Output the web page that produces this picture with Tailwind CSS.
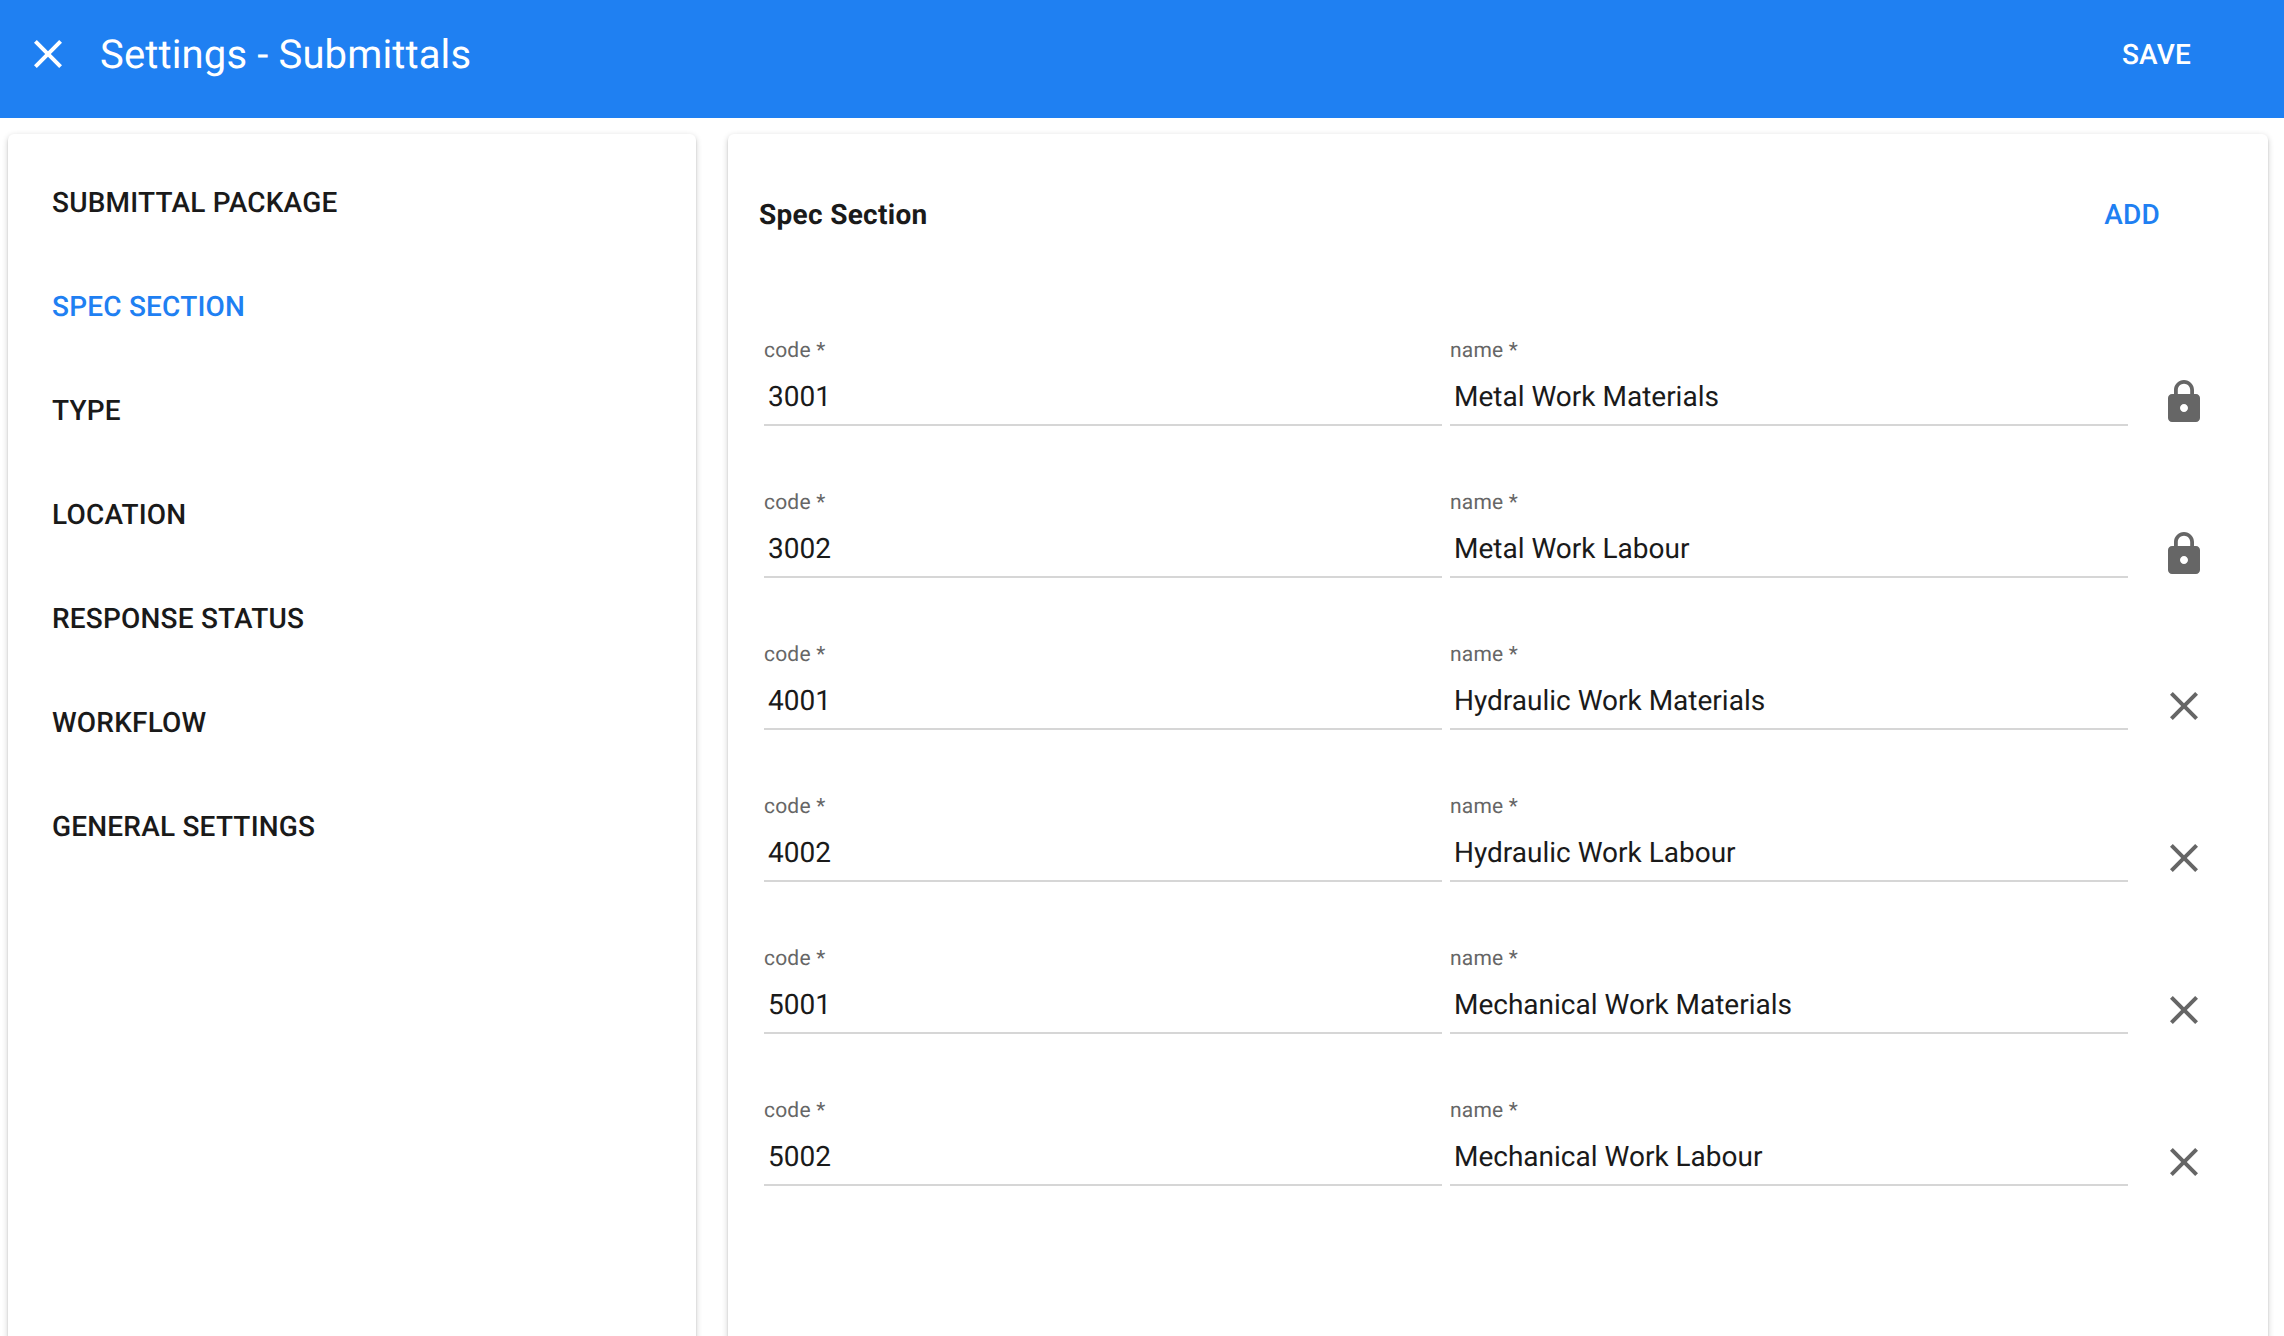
<!DOCTYPE html>
<html lang="en">
<head>
<meta charset="utf-8">
<title>Settings - Submittals</title>
<script src="https://cdn.jsdelivr.net/npm/@tailwindcss/browser@4"></script>
</head>
<body class="m-0 bg-white font-['Roboto',sans-serif] h-[1336px] overflow-hidden [text-rendering:geometricPrecision]">
<header class="h-[118px] bg-[#1f80f2] text-white flex items-center pl-[24px] pr-[93px] pb-[10px]">
  <svg class="w-[48px] h-[48px] fill-white" viewBox="0 0 24 24"><path d="M19 6.41L17.59 5 12 10.59 6.41 5 5 6.41 10.59 12 5 17.59 6.41 19 12 13.41 17.59 19 19 17.59 13.41 12z"/></svg>
  <h1 class="ml-[28px] mt-[2px] text-[40px] leading-[48px] font-normal tracking-[0.14px] grow">Settings - Submittals</h1>
  <span class="mt-[1px] text-[28px] leading-[40px] font-medium tracking-[0.2px]">SAVE</span>
</header>
<main class="flex gap-[32px] pt-[16px] pl-[8px] h-[1218px] overflow-hidden">
  <nav class="w-[688px] h-[1240px] shrink-0 rounded-[6px] bg-white pt-[17px] pl-[44px] shadow-[0_2px_6px_rgba(0,0,0,0.2),0_2px_2px_rgba(0,0,0,0.14),0_4px_2px_-2px_rgba(0,0,0,0.12)] text-[28px] font-medium tracking-[0.2px] text-[#1a1a1a]">
    <div class="h-[104px] flex items-center">SUBMITTAL PACKAGE</div>
    <div class="h-[104px] flex items-center text-[#1f80f2]">SPEC SECTION</div>
    <div class="h-[104px] flex items-center">TYPE</div>
    <div class="h-[104px] flex items-center">LOCATION</div>
    <div class="h-[104px] flex items-center">RESPONSE STATUS</div>
    <div class="h-[104px] flex items-center">WORKFLOW</div>
    <div class="h-[104px] flex items-center">GENERAL SETTINGS</div>
  </nav>
  <section class="w-[1540px] h-[1240px] shrink-0 rounded-[6px] bg-white shadow-[0_2px_6px_rgba(0,0,0,0.2),0_2px_2px_rgba(0,0,0,0.14),0_4px_2px_-2px_rgba(0,0,0,0.12)]">
    <div class="flex items-center justify-between h-[40px] mt-[61px] pl-[31px] pr-[108px]">
      <h2 class="text-[28px] font-bold tracking-[0.3px] text-[#1a1a1a]">Spec Section</h2>
      <span class="text-[28px] font-medium tracking-[0.2px] text-[#1f80f2]">ADD</span>
    </div>
    <div class="mt-[103px] pl-[36px] flex flex-col gap-[64px]">
      <div class="flex items-end">
        <div class="w-[678px] border-b-2 border-[#d6d6d6] h-[88px]"><div class="text-[21px] leading-[24px] pt-[1px] tracking-[0.2px] text-[#666]">code *</div><div class="text-[28px] leading-[44px] pl-[4px] mt-[12px] text-[#1a1a1a]">3001</div></div>
        <div class="w-[678px] ml-[8px] border-b-2 border-[#d6d6d6] h-[88px]"><div class="text-[21px] leading-[24px] pt-[1px] tracking-[0.2px] text-[#666]">name *</div><div class="text-[28px] leading-[44px] pl-[4px] mt-[12px] text-[#1a1a1a]">Metal Work Materials</div></div>
        <svg class="w-[48px] h-[48px] ml-[32px] fill-[#666]" viewBox="0 0 24 24"><path d="M18 8h-1V6c0-2.76-2.24-5-5-5S7 3.24 7 6v2H6c-1.1 0-2 .9-2 2v10c0 1.1.9 2 2 2h12c1.1 0 2-.9 2-2V10c0-1.1-.9-2-2-2zm-6 9c-1.1 0-2-.9-2-2s.9-2 2-2 2 .9 2 2-.9 2-2 2zm3.1-9H8.9V6c0-1.71 1.39-3.1 3.1-3.1 1.71 0 3.1 1.39 3.1 3.1v2z"/></svg>
      </div>
      <div class="flex items-end">
        <div class="w-[678px] border-b-2 border-[#d6d6d6] h-[88px]"><div class="text-[21px] leading-[24px] pt-[1px] tracking-[0.2px] text-[#666]">code *</div><div class="text-[28px] leading-[44px] pl-[4px] mt-[12px] text-[#1a1a1a]">3002</div></div>
        <div class="w-[678px] ml-[8px] border-b-2 border-[#d6d6d6] h-[88px]"><div class="text-[21px] leading-[24px] pt-[1px] tracking-[0.2px] text-[#666]">name *</div><div class="text-[28px] leading-[44px] pl-[4px] mt-[12px] text-[#1a1a1a]">Metal Work Labour</div></div>
        <svg class="w-[48px] h-[48px] ml-[32px] fill-[#666]" viewBox="0 0 24 24"><path d="M18 8h-1V6c0-2.76-2.24-5-5-5S7 3.24 7 6v2H6c-1.1 0-2 .9-2 2v10c0 1.1.9 2 2 2h12c1.1 0 2-.9 2-2V10c0-1.1-.9-2-2-2zm-6 9c-1.1 0-2-.9-2-2s.9-2 2-2 2 .9 2 2-.9 2-2 2zm3.1-9H8.9V6c0-1.71 1.39-3.1 3.1-3.1 1.71 0 3.1 1.39 3.1 3.1v2z"/></svg>
      </div>
      <div class="flex items-end">
        <div class="w-[678px] border-b-2 border-[#d6d6d6] h-[88px]"><div class="text-[21px] leading-[24px] pt-[1px] tracking-[0.2px] text-[#666]">code *</div><div class="text-[28px] leading-[44px] pl-[4px] mt-[12px] text-[#1a1a1a]">4001</div></div>
        <div class="w-[678px] ml-[8px] border-b-2 border-[#d6d6d6] h-[88px]"><div class="text-[21px] leading-[24px] pt-[1px] tracking-[0.2px] text-[#666]">name *</div><div class="text-[28px] leading-[44px] pl-[4px] mt-[12px] text-[#1a1a1a]">Hydraulic Work Materials</div></div>
        <svg class="w-[48px] h-[48px] ml-[32px] fill-[#666]" viewBox="0 0 24 24"><path d="M19 6.41L17.59 5 12 10.59 6.41 5 5 6.41 10.59 12 5 17.59 6.41 19 12 13.41 17.59 19 19 17.59 13.41 12z"/></svg>
      </div>
      <div class="flex items-end">
        <div class="w-[678px] border-b-2 border-[#d6d6d6] h-[88px]"><div class="text-[21px] leading-[24px] pt-[1px] tracking-[0.2px] text-[#666]">code *</div><div class="text-[28px] leading-[44px] pl-[4px] mt-[12px] text-[#1a1a1a]">4002</div></div>
        <div class="w-[678px] ml-[8px] border-b-2 border-[#d6d6d6] h-[88px]"><div class="text-[21px] leading-[24px] pt-[1px] tracking-[0.2px] text-[#666]">name *</div><div class="text-[28px] leading-[44px] pl-[4px] mt-[12px] text-[#1a1a1a]">Hydraulic Work Labour</div></div>
        <svg class="w-[48px] h-[48px] ml-[32px] fill-[#666]" viewBox="0 0 24 24"><path d="M19 6.41L17.59 5 12 10.59 6.41 5 5 6.41 10.59 12 5 17.59 6.41 19 12 13.41 17.59 19 19 17.59 13.41 12z"/></svg>
      </div>
      <div class="flex items-end">
        <div class="w-[678px] border-b-2 border-[#d6d6d6] h-[88px]"><div class="text-[21px] leading-[24px] pt-[1px] tracking-[0.2px] text-[#666]">code *</div><div class="text-[28px] leading-[44px] pl-[4px] mt-[12px] text-[#1a1a1a]">5001</div></div>
        <div class="w-[678px] ml-[8px] border-b-2 border-[#d6d6d6] h-[88px]"><div class="text-[21px] leading-[24px] pt-[1px] tracking-[0.2px] text-[#666]">name *</div><div class="text-[28px] leading-[44px] pl-[4px] mt-[12px] text-[#1a1a1a]">Mechanical Work Materials</div></div>
        <svg class="w-[48px] h-[48px] ml-[32px] fill-[#666]" viewBox="0 0 24 24"><path d="M19 6.41L17.59 5 12 10.59 6.41 5 5 6.41 10.59 12 5 17.59 6.41 19 12 13.41 17.59 19 19 17.59 13.41 12z"/></svg>
      </div>
      <div class="flex items-end">
        <div class="w-[678px] border-b-2 border-[#d6d6d6] h-[88px]"><div class="text-[21px] leading-[24px] pt-[1px] tracking-[0.2px] text-[#666]">code *</div><div class="text-[28px] leading-[44px] pl-[4px] mt-[12px] text-[#1a1a1a]">5002</div></div>
        <div class="w-[678px] ml-[8px] border-b-2 border-[#d6d6d6] h-[88px]"><div class="text-[21px] leading-[24px] pt-[1px] tracking-[0.2px] text-[#666]">name *</div><div class="text-[28px] leading-[44px] pl-[4px] mt-[12px] text-[#1a1a1a]">Mechanical Work Labour</div></div>
        <svg class="w-[48px] h-[48px] ml-[32px] fill-[#666]" viewBox="0 0 24 24"><path d="M19 6.41L17.59 5 12 10.59 6.41 5 5 6.41 10.59 12 5 17.59 6.41 19 12 13.41 17.59 19 19 17.59 13.41 12z"/></svg>
      </div>
    </div>
  </section>
</main>
</body>
</html>
